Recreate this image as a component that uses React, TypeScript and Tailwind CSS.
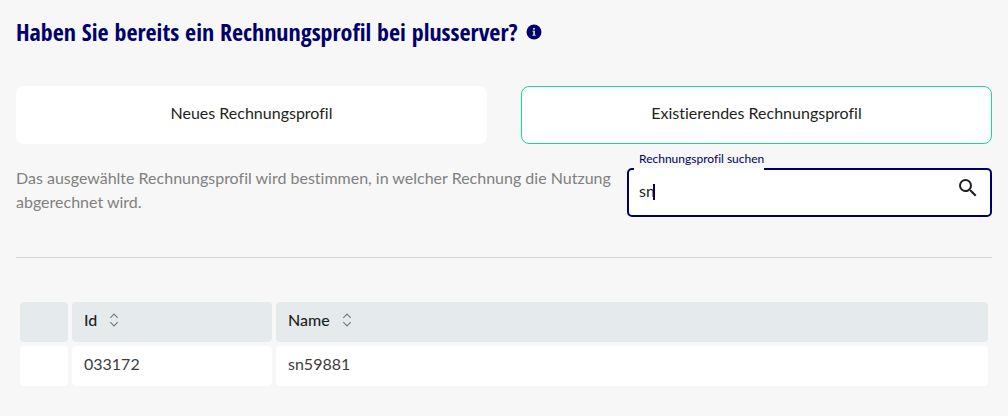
import { useState } from 'react';

function SortIcon() {
  return (
    <svg width="10" height="14" viewBox="0 0 10 14" fill="none" stroke="#757a7c" strokeWidth="1.2" aria-hidden="true">
      <path d="M1.3 4.800 5 1 8.700 4.800M1.300 9.200 5 13 8.700 9.200" />
    </svg>
  );
}

const profiles = [{ id: '033172', name: 'sn59881' }];

export default function App() {
  const [query, setQuery] = useState('sn');
  const th = 'h-10 rounded-sm bg-[#e5ebed] px-3 pb-1 text-left font-medium text-[#1d1f20]';
  const td = 'h-10 rounded-sm bg-white px-3 pb-1 text-[#3c3c3c]';

  return (
    <main className="min-h-screen bg-[#f7f7f7] px-4 pt-4 font-['Lato','Noto_Sans',sans-serif] text-base text-[#1d1f20] [font-variant-ligatures:none]">
      <h1 className="flex h-8 items-center gap-2 font-['Open_Sans_Condensed','Open_Sans',sans-serif] text-2xl font-bold text-[#00006b]">
        Haben Sie bereits ein Rechnungsprofil bei plusserver?
        <button type="button" aria-label="Information">
          <svg className="block" width="16" height="16" viewBox="0 0 16 16" aria-hidden="true">
            <circle cx="8" cy="8" r="7.5" fill="#00006b" />
            <path d="M7.100 4H8.900V5.700H7.100zM6.500 6.800H8.900V10.800H9.600V11.800H6.500V10.800H7.200V7.800H6.500z" fill="#d9d9ee" />
          </svg>
        </button>
      </h1>

      <div className="mt-[38px] grid grid-cols-2 gap-[34px]">
        <button type="button" className="h-[58px] rounded-lg bg-white pb-1">
          Neues Rechnungsprofil
        </button>
        <button type="button" className="h-[58px] rounded-lg border border-[#13da98] bg-white pb-1">
          Existierendes Rechnungsprofil
        </button>
      </div>

      <div className="mt-2 flex justify-between gap-2">
        <p className="flex-1 pt-3.5 leading-6 text-[#808080]">
          Das ausgewählte Rechnungsprofil wird bestimmen, in welcher Rechnung die Nutzung abgerechnet wird.
        </p>
        <div className="w-[365px]">
          <label htmlFor="profile-search" className="block h-4 pl-3 text-xs leading-[14px] text-[#00006b]">
            Rechnungsprofil suchen
          </label>
          <div className="relative flex h-[49px] items-start rounded-[5px] border-2 border-[#00006b] bg-white">
            <span className="absolute -top-0.5 left-[5px] h-0.5 w-[130px] bg-white" />
            <input
              id="profile-search"
              type="text"
              value={query}
              onChange={(e) => setQuery(e.target.value)}
              className="h-10 min-w-0 flex-1 bg-transparent pl-2.5 caret-transparent outline-none"
            />
            <span aria-hidden="true" className="pointer-events-none absolute top-3.5 left-2.5 flex h-4">
              <span className="invisible leading-4">{query}</span>
              <span className="-ml-0.5 w-0.5 bg-[#00006b]" />
            </span>
            <button type="button" aria-label="Suchen" className="mt-1.5 mr-2.5">
              <svg className="block" width="24" height="24" viewBox="0 0 24 24" fill="#1d1f20" aria-hidden="true">
                <path d="M15.500 14h-.79l-.28-.27A6.471 6.471 0 0 0 16 9.500 6.500 6.500 0 1 0 9.500 16c1.610 0 3.090-.59 4.230-1.570l.27.28v.79l5 4.990L20.490 19l-4.990-5zm-6 0C7.010 14 5 11.990 5 9.500S7.010 5 9.500 5 14 7.010 14 9.500 11.990 14 9.500 14z" />
              </svg>
            </button>
          </div>
        </div>
      </div>

      <hr className="mt-10 border-[#d6d6d6]" />

      <table className="mt-10 w-full table-fixed border-separate border-spacing-1">
        <thead>
          <tr>
            <th className={`${th} w-12`} aria-label="Auswahl" />
            <th className={`${th} w-[200px]`}>
              <button type="button" className="flex items-center gap-3">Id <SortIcon /></button>
            </th>
            <th className={th}>
              <button type="button" className="flex items-center gap-3">Name <SortIcon /></button>
            </th>
          </tr>
        </thead>
        <tbody>
          {profiles.map((p) => (
            <tr key={p.id}>
              <td className={td} />
              <td className={td}>{p.id}</td>
              <td className={td}>{p.name}</td>
            </tr>
          ))}
        </tbody>
      </table>
    </main>
  );
}
